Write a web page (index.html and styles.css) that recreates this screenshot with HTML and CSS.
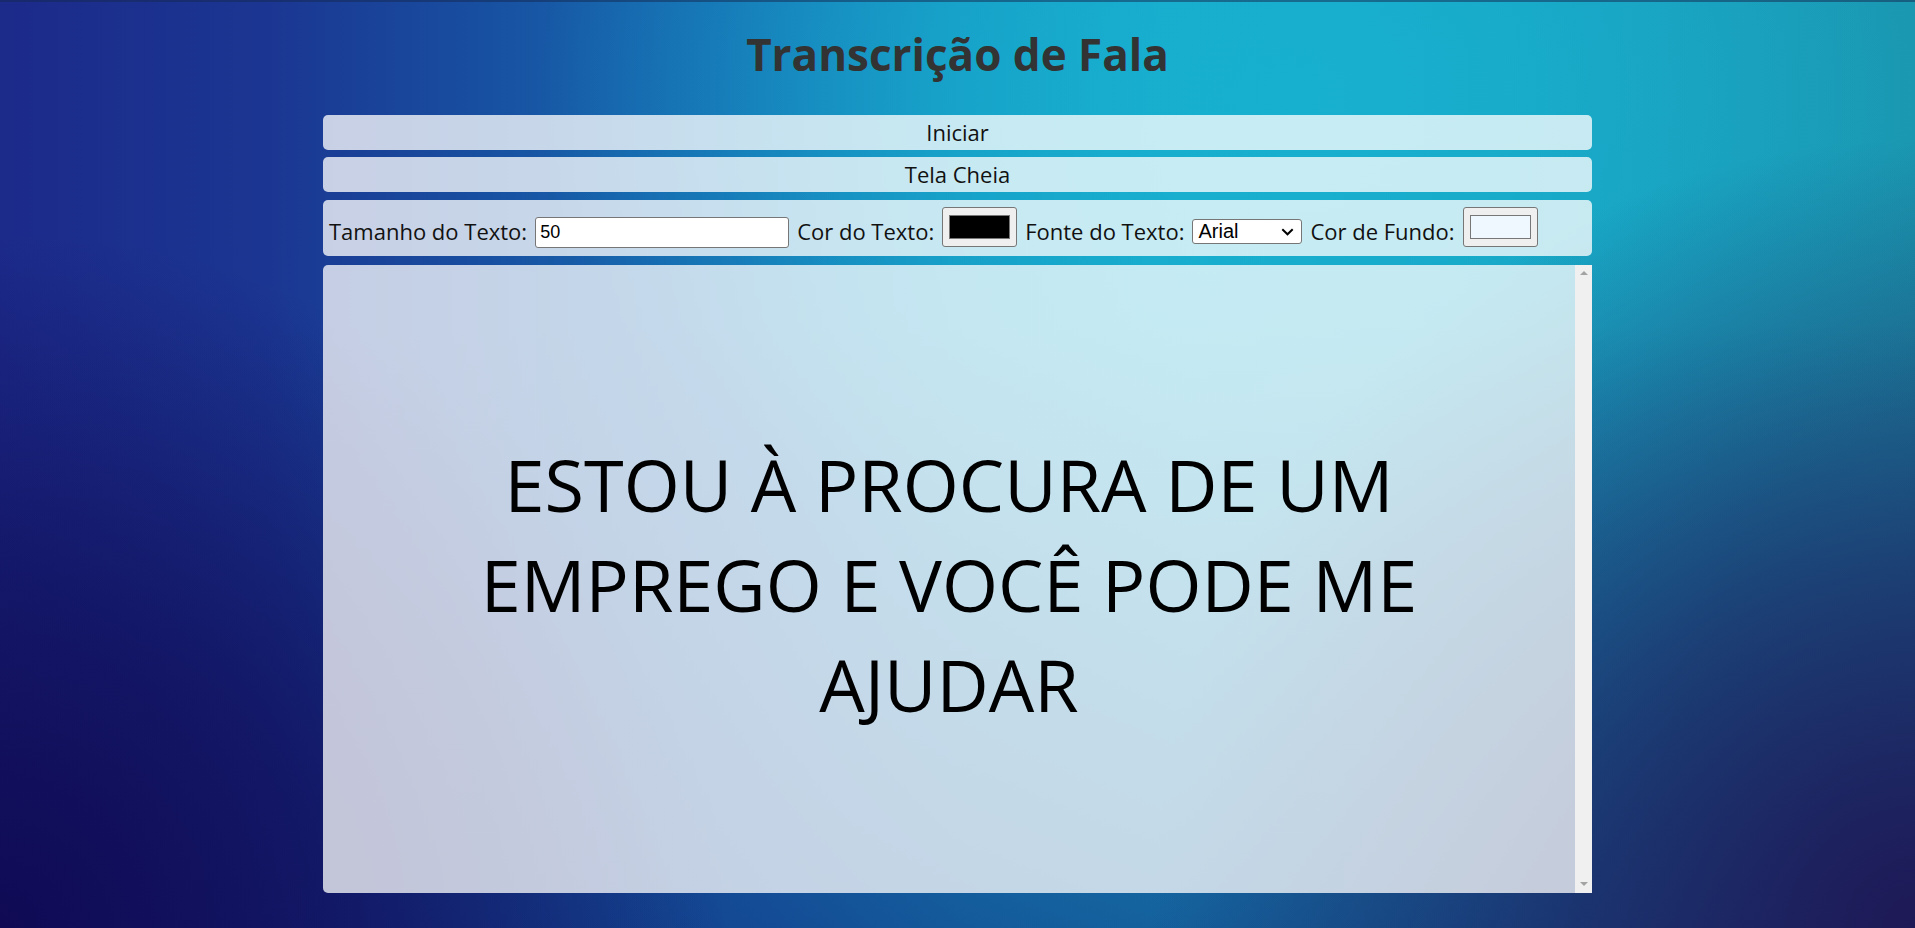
FILE: index.html
```html
<!DOCTYPE html>
<html lang="pt">
<head>
<meta charset="utf-8">
<title>Transcrição de Fala</title>
<link rel="stylesheet" href="styles.css">
</head>
<body>
<main class="app">
  <h1 class="title">Transcrição de Fala</h1>
  <button class="bar-btn btn-start" type="button">Iniciar</button>
  <button class="bar-btn btn-full" type="button">Tela Cheia</button>
  <div class="controls">
    <label class="ctl-label" for="size">Tamanho do Texto:</label>
    <input id="size" class="size-input" type="text" value="50">
    <label class="ctl-label" for="txtcolor">Cor do Texto:</label>
    <input id="txtcolor" class="color-input" type="color" value="#000000">
    <label class="ctl-label" for="font">Fonte do Texto:</label>
    <span class="select-wrap">
      <select id="font" class="font-select">
        <option>Arial</option>
        <option>Verdana</option>
        <option>Times New Roman</option>
      </select>
      <svg class="chevron" width="13" height="8" viewBox="0 0 13 8"><path d="M1.3 1.3 L6.5 6.3 L11.7 1.3" fill="none" stroke="#000" stroke-width="2"/></svg>
    </span>
    <label class="ctl-label" for="bgcolor">Cor de Fundo:</label>
    <input id="bgcolor" class="color-input" type="color" value="#f0f8ff">
  </div>
  <div class="transcript">
    <div class="transcript-text">ESTOU À PROCURA DE UM EMPREGO E VOCÊ PODE ME AJUDAR</div>
    <div class="scrollbar">
      <span class="arrow arrow-up"></span>
      <span class="arrow arrow-down"></span>
    </div>
  </div>
</main>
</body>
</html>
```

FILE: styles.css
```css
html, body {
  margin: 0;
  height: 928px;
  overflow: hidden;
}

body {
  font-family: "Open Sans", "Noto Sans", sans-serif;
  background-color: #16338a;
  background-image:
    radial-gradient(ellipse 38% 75% at 0% 100%, rgba(16, 10, 84, 1) 0%, rgba(16, 10, 84, 0.65) 45%, rgba(16, 10, 84, 0) 100%),
    radial-gradient(ellipse 40% 85% at 100% 100%, rgba(30, 24, 86, 1) 0%, rgba(30, 24, 86, 0.6) 45%, rgba(30, 24, 86, 0) 100%),
    linear-gradient(to bottom, rgba(18, 30, 110, 0) 35%, rgba(18, 40, 120, 0.55) 100%),
    radial-gradient(ellipse 40% 55% at 68% 10%, rgba(24, 178, 208, 0.85) 0%, rgba(24, 178, 208, 0) 100%),
    linear-gradient(to right, #1c2a8a 0%, #1b3692 14%, #184c9e 24%, #1670b4 38%, #1696c4 50%, #17a8cc 62%, #19a0c0 80%, #1b92ab 100%);
  box-shadow: inset 0 2px 0 rgba(20, 40, 80, 0.5);
}

.app {
  width: 1269px;
  margin: 0 auto;
  padding-top: 22px;
  display: flex;
  flex-direction: column;
}

.title {
  margin: 0 0 29px;
  height: 64px;
  line-height: 64px;
  font-size: 44px;
  font-weight: 700;
  color: #333;
  text-align: center;
}

.bar-btn {
  display: block;
  width: 100%;
  height: 35px;
  padding: 0;
  border: none;
  border-radius: 5px;
  background: rgba(255, 255, 255, 0.76);
  font-family: "Open Sans", "Noto Sans", sans-serif;
  font-size: 22px;
  line-height: 35px;
  color: #111;
  cursor: pointer;
}

.btn-start { margin-bottom: 7px; }
.btn-full { margin-bottom: 8px; }

.controls {
  display: flex;
  align-items: center;
  gap: 8px;
  height: 56px;
  padding: 0 6px;
  margin-bottom: 9px;
  border-radius: 5px;
  background: rgba(255, 255, 255, 0.76);
  box-sizing: border-box;
}

.ctl-label {
  font-size: 22px;
  line-height: 30px;
  color: #111;
  margin-top: 6px;
  white-space: nowrap;
}

.size-input {
  width: 254px;
  height: 31px;
  margin-top: 9px;
  padding: 0 4px;
  box-sizing: border-box;
  border: 1px solid #767676;
  border-radius: 3px;
  background: #fff;
  font-family: "Liberation Sans", Arial, sans-serif;
  font-size: 18px;
  color: #000;
}

.color-input {
  -webkit-appearance: none;
  appearance: none;
  width: 75px;
  height: 40px;
  margin: 0 0 2px;
  padding: 7px 6px;
  box-sizing: border-box;
  border: 1px solid #767676;
  border-radius: 3px;
  background: #efefef;
  cursor: pointer;
}

.color-input::-webkit-color-swatch-wrapper {
  padding: 0;
}

.color-input::-webkit-color-swatch {
  border: 1px solid #777;
  border-radius: 0;
}

.select-wrap {
  position: relative;
  display: inline-flex;
  margin-top: 7px;
}

.font-select {
  -webkit-appearance: none;
  appearance: none;
  width: 110px;
  height: 25px;
  padding: 0 0 0 5px;
  box-sizing: border-box;
  border: 1px solid #767676;
  border-radius: 3px;
  background: #fff;
  font-family: "Liberation Sans", Arial, sans-serif;
  font-size: 20px;
  line-height: 23px;
  color: #000;
}

.chevron {
  position: absolute;
  right: 8px;
  top: 9px;
  pointer-events: none;
}

.transcript {
  display: flex;
  height: 628px;
  border-radius: 5px 0 0 5px;
  background: rgba(255, 255, 255, 0.75);
  overflow: hidden;
}

.transcript-text {
  flex: 1;
  display: flex;
  align-items: center;
  justify-content: center;
  text-align: center;
  padding: 10px 90px 0;
  font-size: 72px;
  line-height: 100px;
  color: #000;
}

.scrollbar {
  width: 17px;
  flex: none;
  background: #f0f0f0;
  display: flex;
  flex-direction: column;
  justify-content: space-between;
  align-items: center;
  padding: 6px 0 7px;
  box-sizing: border-box;
}

.arrow {
  width: 0;
  height: 0;
  border-left: 4px solid transparent;
  border-right: 4px solid transparent;
}

.arrow-up { border-bottom: 4px solid #a3a3a3; }
.arrow-down { border-top: 4px solid #a3a3a3; }
```
